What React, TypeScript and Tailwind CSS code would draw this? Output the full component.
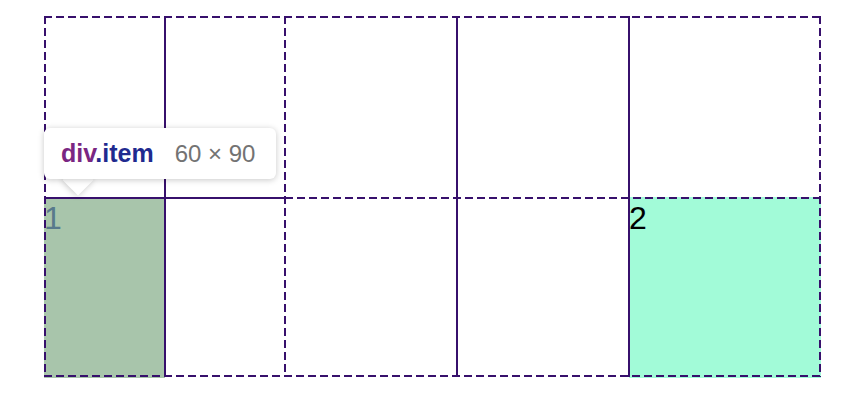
const LINE = '#37106c';

// column and row edges, relative to the grid box
const COLS = [1, 121, 241, 413, 585, 776];
const ROWS = [1, 182, 360];

type Seg = { x1: number; y1: number; x2: number; y2: number; dashed: boolean };

const SEGMENTS: Seg[] = [
  // outer box
  { x1: 0, y1: ROWS[0], x2: 777, y2: ROWS[0], dashed: true },
  { x1: 0, y1: ROWS[2], x2: 777, y2: ROWS[2], dashed: true },
  { x1: COLS[0], y1: 0, x2: COLS[0], y2: 361, dashed: true },
  { x1: COLS[5], y1: 0, x2: COLS[5], y2: 361, dashed: true },
  // inner columns
  { x1: COLS[1], y1: 0, x2: COLS[1], y2: 361, dashed: false },
  { x1: COLS[2], y1: 0, x2: COLS[2], y2: 361, dashed: true },
  { x1: COLS[3], y1: 0, x2: COLS[3], y2: 361, dashed: false },
  { x1: COLS[4], y1: 0, x2: COLS[4], y2: 361, dashed: false },
  // middle row line
  { x1: 0, y1: ROWS[1], x2: COLS[2], y2: ROWS[1], dashed: false },
  { x1: COLS[2], y1: ROWS[1], x2: 777, y2: ROWS[1], dashed: true },
];

function GridLines() {
  return (
    <svg className="pointer-events-none absolute left-0 top-0 overflow-visible" width={777} height={362}>
      {SEGMENTS.map((s, i) => (
        <line
          key={i}
          x1={s.x1}
          y1={s.y1}
          x2={s.x2}
          y2={s.y2}
          stroke={LINE}
          strokeWidth={2}
          strokeDasharray={s.dashed ? '8 4' : undefined}
        />
      ))}
    </svg>
  );
}

function Tooltip() {
  return (
    <div className="absolute left-0 top-[112px]">
      {/* arrow */}
      <div className="absolute left-[23px] top-[41px] h-[22px] w-[22px] rotate-45 bg-white shadow-[0_1px_6px_rgba(0,0,0,0.22)]" />
      <div className="relative flex h-[51px] w-[232px] items-center gap-[21px] rounded-[6px] bg-white pl-[17px] shadow-[0_1px_6px_rgba(0,0,0,0.22)]">
        <span className="text-[25px] font-bold leading-none">
          <span className="text-[#7a2682]">div</span>
          <span className="text-[#1f2a8f]">.item</span>
        </span>
        <span className="text-[24px] leading-none text-[#737373]">60 × 90</span>
      </div>
      <div className="absolute left-[20px] top-[38px] h-[13px] w-[30px] bg-white" />
    </div>
  );
}

export default function App() {
  return (
    <div className="h-[400px] w-[856px] bg-white pl-[44px] pt-[16px] font-['Liberation_Sans',Arial,sans-serif]">
      <div className="relative h-[362px] w-[777px]">
        <div className="grid h-full w-full grid-cols-[121px_120px_172px_172px_192px] grid-rows-[181px_181px]">
          <div className="col-start-1 row-start-2 bg-[#a8c5ab] pt-[3px] text-[32px] leading-[36px] text-[#587a8c]">1</div>
          <div className="col-start-5 row-start-2 bg-[#a2fbd8] pt-[3px] text-[32px] leading-[36px] text-black">2</div>
        </div>
        <GridLines />
        <Tooltip />
      </div>
    </div>
  );
}
